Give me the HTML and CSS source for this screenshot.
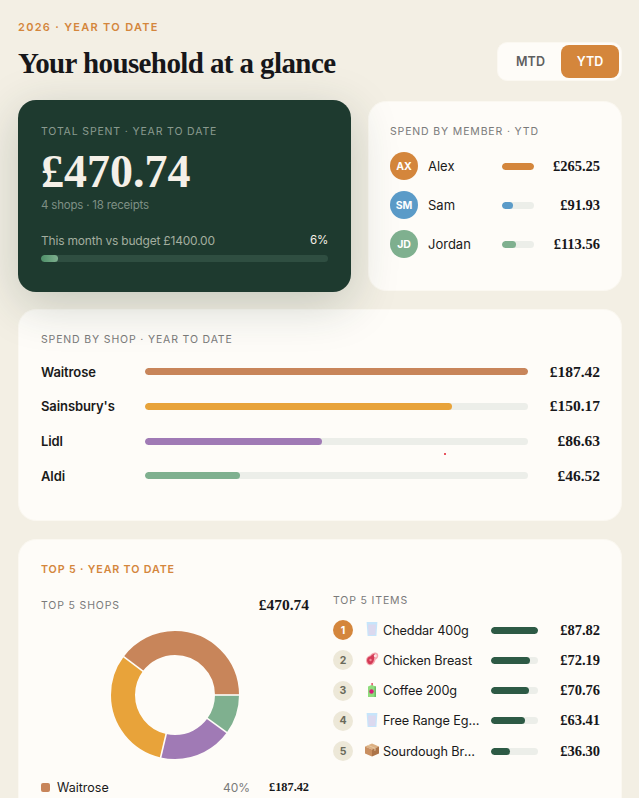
FILE: index.html
```html
<!DOCTYPE html>
<html lang="en">
<head>
<meta charset="utf-8">
<title>Household</title>
<link rel="stylesheet" href="styles.css">
</head>
<body>
<main class="page">
  <header class="head">
    <div>
      <div class="eyebrow">2026 · YEAR TO DATE</div>
      <h1 class="title">Your household at a glance</h1>
    </div>
    <div class="toggle"><button class="tog">MTD</button><button class="tog on">YTD</button></div>
  </header>

  <section class="top-row">
    <div class="hero">
      <div class="hero-label">TOTAL SPENT · YEAR TO DATE</div>
      <div class="hero-amt">£470.74</div>
      <div class="hero-sub">4 shops · 18 receipts</div>
      <div class="hero-row"><span>This month vs budget £1400.00</span><span class="hero-pct">6%</span></div>
      <div class="hero-track"><div class="hero-fill"></div></div>
    </div>
    <div class="card members">
      <div class="label">SPEND BY MEMBER · YTD</div>
      <div class="member-list">
        <div class="member"><span class="avatar c-orange">AX</span><span class="m-name">Alex</span><span class="track m-track"><span class="fill c-orange" style="width:100%"></span></span><span class="money">£265.25</span></div>
        <div class="member"><span class="avatar c-blue">SM</span><span class="m-name">Sam</span><span class="track m-track"><span class="fill c-blue" style="width:35%"></span></span><span class="money">£91.93</span></div>
        <div class="member"><span class="avatar c-green">JD</span><span class="m-name">Jordan</span><span class="track m-track"><span class="fill c-green" style="width:43%"></span></span><span class="money">£113.56</span></div>
      </div>
    </div>
  </section>

  <section class="card shops">
    <div class="label">SPEND BY SHOP · YEAR TO DATE</div>
    <div class="shop-list">
      <div class="shop"><span class="s-name">Waitrose</span><span class="track"><span class="fill c-wait" style="width:100%"></span></span><span class="money big">£187.42</span></div>
      <div class="shop"><span class="s-name">Sainsbury's</span><span class="track"><span class="fill c-sains" style="width:80.1%"></span></span><span class="money big">£150.17</span></div>
      <div class="shop"><span class="s-name">Lidl</span><span class="track"><span class="fill c-lidl" style="width:46.2%"></span></span><span class="money big">£86.63</span></div>
      <div class="shop"><span class="s-name">Aldi</span><span class="track"><span class="fill c-green" style="width:24.8%"></span></span><span class="money big">£46.52</span></div>
    </div>
    <i class="dot"></i>
  </section>

  <section class="card top5">
    <div class="label accent">TOP 5 · YEAR TO DATE</div>
    <div class="top5-grid">
      <div>
        <div class="t-head"><span class="label">TOP 5 SHOPS</span><span class="money big">£470.74</span></div>
        <svg class="donut" viewBox="0 0 128 128" width="128" height="128">
          <g fill="none" stroke-width="24" transform="translate(64 64) scale(1 -1)">
            <circle r="52" stroke="#c8855a" pathLength="100" stroke-dasharray="39.8 60.2" stroke-dashoffset="0"/>
            <circle r="52" stroke="#e8a33a" pathLength="100" stroke-dasharray="31.6 68.4" stroke-dashoffset="-39.8"/>
            <circle r="52" stroke="#a07ab5" pathLength="100" stroke-dasharray="18.6 81.4" stroke-dashoffset="-71.4"/>
            <circle r="52" stroke="#7fb08f" pathLength="100" stroke-dasharray="10 90" stroke-dashoffset="-90"/>
          </g>
          <g stroke="#fefcf8" stroke-width="1.6" transform="translate(64 64)">
            <line x1="39" y1="0" x2="65" y2="0"/>
            <line x1="-30.5" y1="-22.7" x2="-52.1" y2="-38.9"/>
            <line x1="-8.6" y1="38" x2="-14.6" y2="63.4"/>
            <line x1="30.9" y1="22.4" x2="52.6" y2="38.2"/>
          </g>
        </svg>
        <div class="legend"><span class="swatch c-wait"></span><span class="l-name">Waitrose</span><span class="l-pct">40%</span><span class="money small">£187.42</span></div>
      </div>
      <div>
        <div class="label items-label">TOP 5 ITEMS</div>
        <div class="item-list">
          <div class="item"><span class="rank first">1</span>
            <svg class="emo" viewBox="0 0 14 14" width="14" height="14" role="img" aria-label="🥛"><path d="M1.600 0h10.800l-1 14H2.600z" fill="#c6e5fb"/><path d="M3 2.600h8l-.7 10.400H3.700z" fill="#dbd9ef"/></svg>
            <span class="i-name">Cheddar 400g</span><span class="track i-track"><span class="fill c-dark" style="width:100%"></span></span><span class="money">£87.82</span></div>
          <div class="item"><span class="rank">2</span>
            <svg class="emo" viewBox="0 0 14 14" width="14" height="14" role="img" aria-label="🥩"><path d="M1 8.200C1 5.600 3 3.800 5.200 3.200 6.600 1.600 8.600.4 10.600.6c2 .3 3 2 2.600 3.900-.3 1.600-1.500 2.600-2.700 3.200-.4 2.600-2.200 5.300-5 5.500C2.900 13.400 1 11 1 8.200z" fill="#f3a7ae"/><path d="M2 8.300c0-2.200 1.700-3.700 3.700-4.100 1.200-1.500 2.700-2.500 4.300-2.500l-.9 4.900c-.1 2.600-1.600 5.600-3.900 5.700C3.400 12.400 2 10.500 2 8.300z" fill="#d43a56"/><circle cx="10.300" cy="3.700" r="1.500" fill="#fbe3e4"/><circle cx="5.500" cy="8" r="1.200" fill="#f08a98"/></svg>
            <span class="i-name">Chicken Breast</span><span class="track i-track"><span class="fill c-dark" style="width:83%"></span></span><span class="money">£72.19</span></div>
          <div class="item"><span class="rank">3</span>
            <svg class="emo" viewBox="0 0 14 14" width="14" height="14" role="img" aria-label="🧃"><path d="M6.500 0h1.200v3H6.500z" fill="#d7263d"/><path d="M3 3.500 6.500 2 11 3.500V14H3z" fill="#8fdc7c"/><path d="M9.500 3.500H11V14H9.500z" fill="#6dbd66"/><circle cx="6.500" cy="8.500" r="2.200" fill="#d81b78"/></svg>
            <span class="i-name">Coffee 200g</span><span class="track i-track"><span class="fill c-dark" style="width:81%"></span></span><span class="money">£70.76</span></div>
          <div class="item"><span class="rank">4</span>
            <svg class="emo" viewBox="0 0 14 14" width="14" height="14" role="img" aria-label="🥛"><path d="M1.600 0h10.800l-1 14H2.600z" fill="#c6e5fb"/><path d="M3 2.600h8l-.7 10.400H3.700z" fill="#dbd9ef"/></svg>
            <span class="i-name">Free Range Eggs 12</span><span class="track i-track"><span class="fill c-dark" style="width:72%"></span></span><span class="money">£63.41</span></div>
          <div class="item"><span class="rank">5</span>
            <svg class="emo" viewBox="0 0 14 14" width="14" height="14" role="img" aria-label="📦"><path d="M7 .5 14 3.500 7 6.500 0 3.500z" fill="#dcb083"/><path d="M0 3.500 7 6.500V13.500L0 10.500z" fill="#c98f60"/><path d="M14 3.500 7 6.500V13.500L14 10.500z" fill="#ad7448"/><path d="M3.300 2 10.500 5v2.500l-1 .4V5.400L2.300 2.400z" fill="#e8cba6"/></svg>
            <span class="i-name">Sourdough Bread</span><span class="track i-track"><span class="fill c-dark" style="width:41%"></span></span><span class="money">£36.30</span></div>
        </div>
      </div>
    </div>
  </section>
</main>
</body>
</html>
```
FILE: styles.css
```css
* { box-sizing: border-box; }
html, body { margin: 0; height: 798px; overflow: hidden; }
body { background: #f3efe4; font-family: Inter, "Noto Sans", sans-serif; color: #1a1a1a; }
.page { padding: 20px 17px 0 18px; }
.head { display: flex; justify-content: space-between; align-items: flex-start; height: 80px; }
.eyebrow { font-size: 11px; font-weight: 600; letter-spacing: 1.3px; color: #d4863c; line-height: 14px; }
.title { margin: 12px 0 0; font-family: "Liberation Serif", serif; font-size: 29px; font-weight: 700; line-height: 34px; letter-spacing: -.6px; color: #17171a; }
.toggle { display: flex; padding: 2px; margin-top: 22px; width: 125px; height: 39px; background: #fefcf8; border-radius: 10px; border: 1px solid #fbf8f1; }
.tog { flex: 1; border: 0; background: none; font: 600 12.5px Inter, sans-serif; color: #5f5f5f; border-radius: 8px; padding: 0; }
.tog.on { flex: 0 0 58px; background: #d4863c; color: #fff; }
.top-row { display: flex; gap: 17px; }
.hero { width: 333px; height: 192px; padding: 25px 23px; background: #1e3a2f; border-radius: 18px; box-shadow: 0 12px 48px rgba(30,58,47,.22); color: #f5f0e8; position: relative; z-index: 1; }
.hero-label { font-size: 10.5px; letter-spacing: .85px; line-height: 13px; color: #8a9a8f; }
.hero-amt { font-family: "Liberation Serif", serif; font-size: 46px; font-weight: 700; letter-spacing: 0; line-height: 50px; margin-top: 9px; }
.hero-sub { font-size: 11.5px; line-height: 14px; color: #7f9085; letter-spacing: -.2px; margin-top: 1px; }
.hero-row { display: flex; justify-content: space-between; font-size: 12px; line-height: 15px; margin-top: 21px; color: #a3ae9f; letter-spacing: -.2px; }
.hero-pct { color: #f5f0e8; font-size: 11.5px; }
.hero-track { height: 7px; background: #2f4e41; border-radius: 4px; margin-top: 7px; overflow: hidden; }
.hero-fill { width: 6%; height: 100%; background: linear-gradient(90deg, #4d8f68, #7fb08f); border-radius: 4px; }
.card { background: #fefcf8; border-radius: 18px; border: 1px solid #fbf8f1; position: relative; }
.members { flex: 1; height: 190px; margin-top: 1px; padding: 23px 21px; }
.label { font-size: 10.5px; letter-spacing: .85px; line-height: 13px; color: #7a7a7a; }
.accent { color: #d4863c; font-weight: 600; }
.member-list { display: flex; flex-direction: column; gap: 11px; margin-top: 14px; }
.member { display: flex; align-items: center; height: 28px; }
.avatar { width: 28px; height: 28px; border-radius: 50%; color: #fff; font-size: 10.5px; font-weight: 700; display: flex; align-items: center; justify-content: center; flex: none; }
.m-name { width: 74px; margin-left: 10px; font-size: 13px; flex: none; }
.track { display: block; height: 7px; background: #eceee9; border-radius: 4px; flex: 1; overflow: hidden; }
.fill { display: block; height: 100%; border-radius: 4px; }
.m-track { flex: 0 0 32px; }
.money { font-family: "Liberation Serif", serif; font-weight: 700; font-size: 14.5px; margin-left: auto; text-align: right; color: #17171a; white-space: nowrap; }
.money.big { font-size: 15.5px; }
.money.small { font-size: 12.3px; }
.c-orange { background: #d4863c; }
.c-blue { background: #5b9bc8; }
.c-green { background: #7fb08f; }
.c-wait { background: #c8855a; }
.c-sains { background: #e8a33a; }
.c-lidl { background: #a07ab5; }
.c-dark { background: #2d5a45; }
.shops { margin-top: 17px; height: 212px; padding: 23px 21px 23px 22px; }
.shop-list { display: flex; flex-direction: column; gap: 19.8px; margin-top: 18px; }
.shop { display: flex; align-items: center; height: 15px; }
.s-name { flex: 0 0 104px; font-size: 13px; font-weight: 600; letter-spacing: -.1px; }
.shop .track { flex: 0 0 383px; }
.dot { position: absolute; left: 425px; top: 143px; width: 2px; height: 2px; border-radius: 50%; background: #e01e2e; }
.top5 { margin-top: 18px; height: 300px; padding: 23px 21px 22px 22px; }
.top5-grid { display: grid; grid-template-columns: 268px 1fr; gap: 24px; margin-top: 20px; }
.top5 .accent { font-size: 10.7px; }
.t-head { display: flex; justify-content: space-between; align-items: center; height: 18px; }
.donut { display: block; margin: 17px auto 0; }
.legend { display: flex; align-items: center; height: 16px; margin-top: 20px; font-size: 12.5px; }
.swatch { width: 9px; height: 9px; border-radius: 2px; }
.l-name { margin-left: 7px; }
.l-pct { margin-left: auto; color: #7a7a7a; font-size: 12px; }
.legend .money { margin-left: 19px; }
.items-label { margin-top: -2px; }
.item-list { display: flex; flex-direction: column; gap: 10.25px; margin-top: 13px; }
.item { display: flex; align-items: center; height: 20px; }
.rank { width: 20px; height: 20px; border-radius: 50%; background: #ede8d8; color: #6a6a5a; font-size: 10.5px; font-weight: 700; display: flex; align-items: center; justify-content: center; flex: none; }
.rank.first { background: #d4863c; color: #fff; }
.emo { display: block; margin: 0 4px 0 12px; flex: none; position: relative; top: -1px; }
.i-name { width: 97px; font-size: 12.7px; letter-spacing: -.12px; flex: none; white-space: nowrap; overflow: hidden; text-overflow: ellipsis; }
.i-track { flex: 0 0 47px; margin-left: 11px; }
```
